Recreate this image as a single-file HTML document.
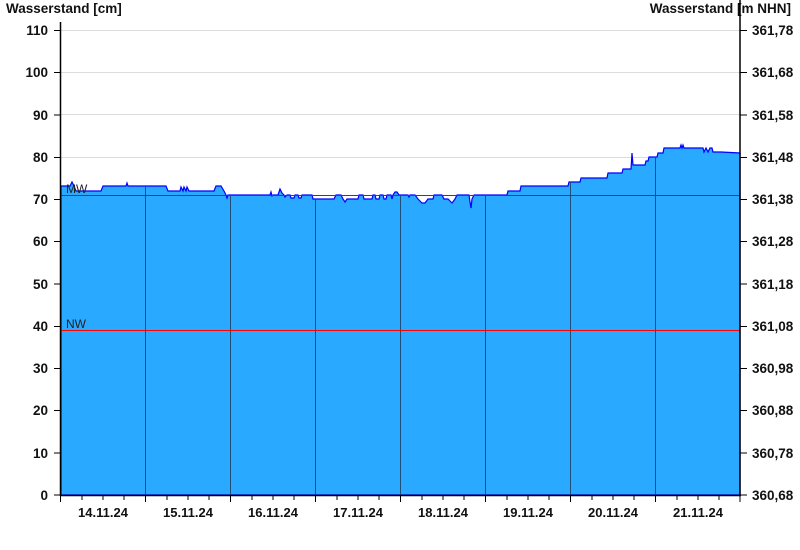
<!DOCTYPE html>
<html><head><style>
html,body{margin:0;padding:0;background:#fff;}
svg{display:block;font-family:"Liberation Sans",Arial,sans-serif;}
</style></head><body>
<svg width="800" height="550" viewBox="0 0 800 550" xmlns="http://www.w3.org/2000/svg">
<g font-weight="bold" font-size="13.5" fill="#111">
<text x="6" y="13">Wasserstand [cm]</text>
<text x="791" y="13" text-anchor="end">Wasserstand [m NHN]</text>
</g>
<g stroke="#dcdcdc" stroke-width="1">
<line x1="61" y1="30.5" x2="740" y2="30.5"/>
<line x1="61" y1="72.5" x2="740" y2="72.5"/>
<line x1="61" y1="114.5" x2="740" y2="114.5"/>
<line x1="61" y1="157.5" x2="740" y2="157.5"/>
</g>
<path fill="#29a9ff" stroke="#0000ff" stroke-width="1.2" d="M61,186 L70,186 L72,182 L74,186 L76,191 L101,191 L103,186 L126,186 L127,183 L128,186 L166,186 L168,191 L180,191 L181,187 L183,191 L184,187 L186,191 L187,187 L189,191 L214,191 L216,186 L221,186 L224,191 L226,195 L227,198 L228,195 L270,195 L271,192 L272,196 L273,195 L278,195 L280,189 L282,193 L284,195 L285,197 L287,195 L290,195 L291,198 L294,198 L295,195 L298,195 L299,198 L301,198 L302,195 L312,195 L313,199 L334,199 L336,195 L341,195 L343,199 L345,202 L347,199 L358,199 L359,195 L363,195 L364,199 L372,199 L373,195 L375,195 L376,199 L379,199 L380,195 L383,195 L384,199 L386,199 L387,195 L391,195 L392,199 L393,195 L395,192 L397,192 L399,195 L408,195 L409,197 L410,195 L415,195 L418,199 L422,203 L425,203 L428,199 L433,199 L434,195 L442,195 L444,199 L448,199 L452,203 L455,199 L457,195 L469,195 L470,202 L471,208 L472,199 L474,195 L507,195 L508,191 L520,191 L521,186 L568,186 L569,182 L580,182 L581,178 L607,178 L608,173 L622,173 L623,169 L631,169 L632,153 L633,165 L634,165 L645,165 L646,161 L648,161 L649,157 L652,157 L653,157 L657,157 L658,153 L663,153 L664,148 L680,148 L681,145 L682,148 L683,145 L684,148 L703,148 L704,152 L706,148 L708,152 L710,148 L712,148 L713,152 L720,152 L721,152 L740,153 L740,495 L61,495 Z"/>
<g stroke="#1f4f78" stroke-width="1">
<line x1="145.5" y1="186" x2="145.5" y2="495"/>
<line x1="230.5" y1="195" x2="230.5" y2="495"/>
<line x1="315.5" y1="199" x2="315.5" y2="495"/>
<line x1="400.5" y1="195" x2="400.5" y2="495"/>
<line x1="485.5" y1="195" x2="485.5" y2="495"/>
<line x1="570.5" y1="182" x2="570.5" y2="495"/>
<line x1="655.5" y1="157" x2="655.5" y2="495"/>
</g>
<line x1="61" y1="195.5" x2="740" y2="195.5" stroke="#007000" stroke-width="1"/>
<line x1="61" y1="330.5" x2="740" y2="330.5" stroke="#ff0000" stroke-width="1"/>
<g font-size="12" fill="#222"><text x="66" y="193">MW</text><text x="66" y="328">NW</text></g>
<g stroke="#000" stroke-width="1.5" fill="none">
<line x1="60.5" y1="22" x2="60.5" y2="496"/>
<line x1="740" y1="0" x2="740" y2="496"/>
<line x1="60" y1="495.5" x2="741" y2="495.5"/>
</g>
<g stroke="#000" stroke-width="1">
<path d="M54,30.5H61M54,72.5H61M54,115H61M54,157.5H61M54,199.5H61M54,241.5H61M54,284H61M54,326.5H61M54,368.5H61M54,410.5H61M54,453H61M54,495H61"/>
<path d="M740,30.5H747M740,72.5H747M740,115H747M740,157.5H747M740,199.5H747M740,241.5H747M740,284H747M740,326.5H747M740,368.5H747M740,410.5H747M740,453H747M740,495H747"/>
<path d="M60.5,495V502M145.5,495V502M230.5,495V502M315.5,495V502M400.5,495V502M485.5,495V502M570.5,495V502M655.5,495V502M740,495V502"/>
<path d="M82,495V500M103,495V500M124,495V500M167,495V500M188,495V500M209,495V500M252,495V500M273,495V500M294,495V500M337,495V500M358,495V500M379,495V500M422,495V500M443,495V500M464,495V500M507,495V500M528,495V500M549,495V500M592,495V500M613,495V500M634,495V500M677,495V500M698,495V500M719,495V500"/>
</g>
<g font-weight="bold" font-size="13.5" fill="#111" text-anchor="end">
<text x="48" y="35">110</text><text x="48" y="77">100</text><text x="48" y="120">90</text><text x="48" y="162">80</text><text x="48" y="204">70</text><text x="48" y="246">60</text><text x="48" y="289">50</text><text x="48" y="331">40</text><text x="48" y="373">30</text><text x="48" y="415">20</text><text x="48" y="458">10</text><text x="48" y="500">0</text>
</g>
<g font-weight="bold" font-size="13.5" fill="#111">
<text x="752" y="35">361,78</text><text x="752" y="77">361,68</text><text x="752" y="120">361,58</text><text x="752" y="162">361,48</text><text x="752" y="204">361,38</text><text x="752" y="246">361,28</text><text x="752" y="289">361,18</text><text x="752" y="331">361,08</text><text x="752" y="373">360,98</text><text x="752" y="415">360,88</text><text x="752" y="458">360,78</text><text x="752" y="500">360,68</text>
</g>
<g font-weight="bold" font-size="13" fill="#111" text-anchor="middle">
<text x="103" y="517">14.11.24</text><text x="188" y="517">15.11.24</text><text x="273" y="517">16.11.24</text><text x="358" y="517">17.11.24</text><text x="443" y="517">18.11.24</text><text x="528" y="517">19.11.24</text><text x="613" y="517">20.11.24</text><text x="698" y="517">21.11.24</text>
</g>
</svg>
</body></html>
